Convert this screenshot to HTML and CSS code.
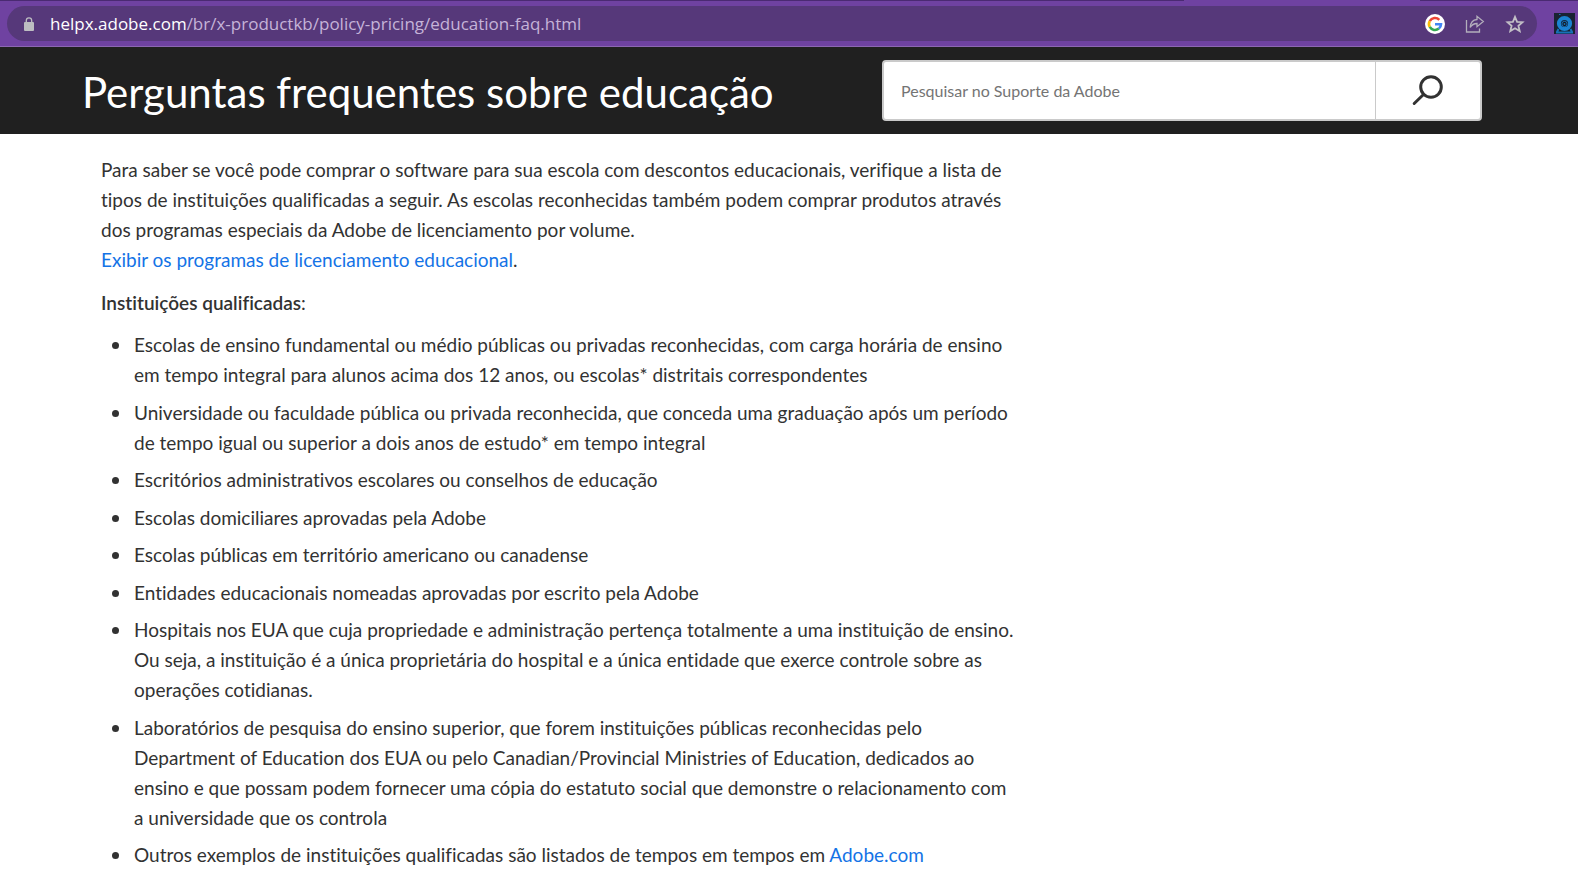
FILE: index.html
```html
<!DOCTYPE html>
<html lang="pt-BR">
<head>
<meta charset="utf-8">
<title>Perguntas frequentes sobre educação</title>
<link rel="stylesheet" href="styles.css">
</head>
<body>
<div class="toolbar">
  <div class="tab-edge"><span class="tab-edge-left"></span><span class="tab-edge-right"></span></div>
  <div class="toolbar-row">
    <div class="omnibox">
      <svg class="lock" width="12" height="14" viewBox="0 0 12 14" aria-hidden="true"><rect x="1" y="5" width="10" height="9" rx="1" fill="#bdbdc2"/><path d="M3.3 5.500V3.600a2.700 2.700 0 0 1 5.400 0v1.900" fill="none" stroke="#bdbdc2" stroke-width="1.300"/></svg>
      <div class="url"><span class="host">helpx.adobe.com</span>/br/x-productkb/policy-pricing/education-faq.html</div>
      <div class="actions">
        <button class="icon-button" type="button" aria-label="Google">
          <svg width="20" height="20" viewBox="0 0 20 20"><circle cx="10" cy="10" r="10" fill="#fff"/><g fill="none" stroke-width="2.600"><path d="M4.750 7.050A6 6 0 0 1 14.300 5.800" stroke="#ea4335"/><path d="M4.750 12.950A6 6 0 0 1 4.750 7.050" stroke="#fbbc05"/><path d="M13.850 14.600A6 6 0 0 1 4.750 12.950" stroke="#34a853"/><path d="M10 10.200h6A6 6 0 0 1 13.850 14.600" stroke="#4285f4"/></g></svg>
        </button>
        <button class="icon-button" type="button" aria-label="Compartilhar">
          <svg width="20" height="20" viewBox="0 0 20 20" fill="none" stroke="#b3aebc" stroke-width="1.300"><path d="M1.500 6v12h13v-3.500"/><path d="M5.200 13.500C5.500 8.800 8 5.800 12 5.500V2.300L18.300 7.500 12 12.700V9.500C9 9.500 6.800 10.800 5.200 13.500Z"/></svg>
        </button>
        <button class="icon-button" type="button" aria-label="Favoritos">
          <svg width="20" height="20" viewBox="0 0 20 20"><path d="M10 2.800l2.100 5 5.400.4-4.100 3.600 1.300 5.300L10 14.200l-4.700 2.900 1.300-5.300L2.500 8.200l5.400-.4Z" fill="none" stroke="#c2bfc6" stroke-width="1.800"/></svg>
        </button>
      </div>
    </div>
    <button class="icon-button" type="button" aria-label="Extensão">
      <svg width="21" height="21" viewBox="0 0 21 21"><path fill="#192333" d="M0 0h21v21H0z"/><path d="M2 19.500h17M4.500 16l-1.500 3M16.500 16l1.500 3" stroke="#1772b8" stroke-width="2"/><circle cx="10.500" cy="10.500" r="5.600" fill="#14283f" stroke="#1b83d2" stroke-width="4"/><circle cx="10.500" cy="11" r="2.600" fill="#12151c" stroke="#1772b8"/><circle cx="10.500" cy="11" r="1" fill="#1772b8"/><path d="M5 1.500h1.500" stroke="#1772b8"/></svg>
    </button>
  </div>
</div>
<header class="page-header">
  <h1 class="title">Perguntas frequentes sobre educação</h1>
  <form class="search" role="search">
    <input class="search-input" type="search" aria-label="Pesquisar no Suporte da Adobe" placeholder="Pesquisar no Suporte da Adobe">
    <button class="search-button" type="button" aria-label="Pesquisar">
      <svg width="32" height="32" viewBox="0 0 32 32" fill="none" stroke="#323232" stroke-width="3"><circle cx="19" cy="12" r="10.300"/><path d="M11.500 19.500L2.200 28.500" stroke-linecap="round"/></svg>
    </button>
  </form>
</header>
<main class="content">
  <p class="intro">Para saber se você pode comprar o software para sua escola com descontos educacionais, verifique a lista de<br>tipos de instituições qualificadas a seguir. As escolas reconhecidas também podem comprar produtos através<br>dos programas especiais da Adobe de licenciamento por volume.<br><a class="link" href="#">Exibir os programas de licenciamento educacional</a>.</p>
  <p class="subhead"><b class="subhead-text">Instituições qualificadas</b>:</p>
  <ul class="list">
    <li class="item">Escolas de ensino fundamental ou médio públicas ou privadas reconhecidas, com carga horária de ensino<br>em tempo integral para alunos acima dos 12 anos, ou escolas* distritais correspondentes</li>
    <li class="item">Universidade ou faculdade pública ou privada reconhecida, que conceda uma graduação após um período<br>de tempo igual ou superior a dois anos de estudo* em tempo integral</li>
    <li class="item">Escritórios administrativos escolares ou conselhos de educação</li>
    <li class="item">Escolas domiciliares aprovadas pela Adobe</li>
    <li class="item">Escolas públicas em território americano ou canadense</li>
    <li class="item">Entidades educacionais nomeadas aprovadas por escrito pela Adobe</li>
    <li class="item">Hospitais nos EUA que cuja propriedade e administração pertença totalmente a uma instituição de ensino.<br>Ou seja, a instituição é a única proprietária do hospital e a única entidade que exerce controle sobre as<br>operações cotidianas.</li>
    <li class="item">Laboratórios de pesquisa do ensino superior, que forem instituições públicas reconhecidas pelo<br>Department of Education dos EUA ou pelo Canadian/Provincial Ministries of Education, dedicados ao<br>ensino e que possam podem fornecer uma cópia do estatuto social que demonstre o relacionamento com<br>a universidade que os controla</li>
    <li class="item">Outros exemplos de instituições qualificadas são listados de tempos em tempos em <a class="link" href="#">Adobe.com</a></li>
  </ul>
</main>
</body>
</html>
```
FILE: styles.css
```css
* { box-sizing: border-box; }
body {
  margin: 0;
  background: #fff;
  color: #323232;
  font-family: Lato, "Open Sans", sans-serif;
  font-size: 19px;
  line-height: 30px;
  font-variant-ligatures: no-common-ligatures;
}
button { margin: 0; padding: 0; border: 0; background: none; }
svg { display: block; }

.toolbar { background: #6f42a1; border-bottom: 1px solid #8c67b2; }
.tab-edge { display: flex; justify-content: space-between; height: 1px; }
.tab-edge-left { width: 75%; background: #4a2a72; }
.tab-edge-right { width: 10%; background: #4a2a72; }
.toolbar-row {
  display: flex;
  align-items: center;
  gap: 17px;
  padding: 5px 3px 5px 7px;
}
.omnibox {
  flex: 1;
  display: flex;
  align-items: center;
  height: 35px;
  padding: 0 12px 0 16px;
  border-radius: 18px;
  background: #56387a;
}
.url {
  flex: 1;
  margin-left: 15px;
  color: #c5b3d8;
  font-family: "Open Sans", sans-serif;
  font-size: 17px;
  white-space: nowrap;
}
.host { color: #fff; }
.actions { display: flex; gap: 20px; }

.page-header {
  display: flex;
  justify-content: space-between;
  align-items: flex-start;
  padding: 13px 96px 10px 82px;
  background: #202020;
}
.title {
  margin: 0;
  color: #fff;
  font-size: 42px;
  font-weight: 400;
  line-height: 64px;
  white-space: nowrap;
}
.search {
  display: flex;
  width: 600px;
  height: 61px;
  border: 2px solid #cacaca;
  border-radius: 4px;
  background: #fff;
}
.search-input {
  flex: 1;
  min-width: 0;
  padding: 0 17px;
  border: 0;
  border-right: 1px solid #cacaca;
  background: none;
  font-family: inherit;
  font-size: 16px;
}
.search-input::placeholder { color: #747474; opacity: 1; }
.search-button { display: grid; place-items: center; width: 104px; }

.content { padding: 21px 101px; }
.intro { margin: 0 0 13px; }
.subhead { margin: 0 0 12px; }
.subhead-text { font-weight: 600; }
.link { color: #1473e6; text-decoration: none; }
.list { margin: 0; padding: 0 0 0 33px; list-style: none; }
.item::before {
  content: "";
  display: inline-block;
  width: 7px;
  height: 7px;
  margin: 0 15px 4px -22px;
  border-radius: 50%;
  background: #323232;
  vertical-align: middle;
}
.item + .item { margin-top: 8px; }
.item + .item:nth-child(odd) { margin-top: 7px; }
```
